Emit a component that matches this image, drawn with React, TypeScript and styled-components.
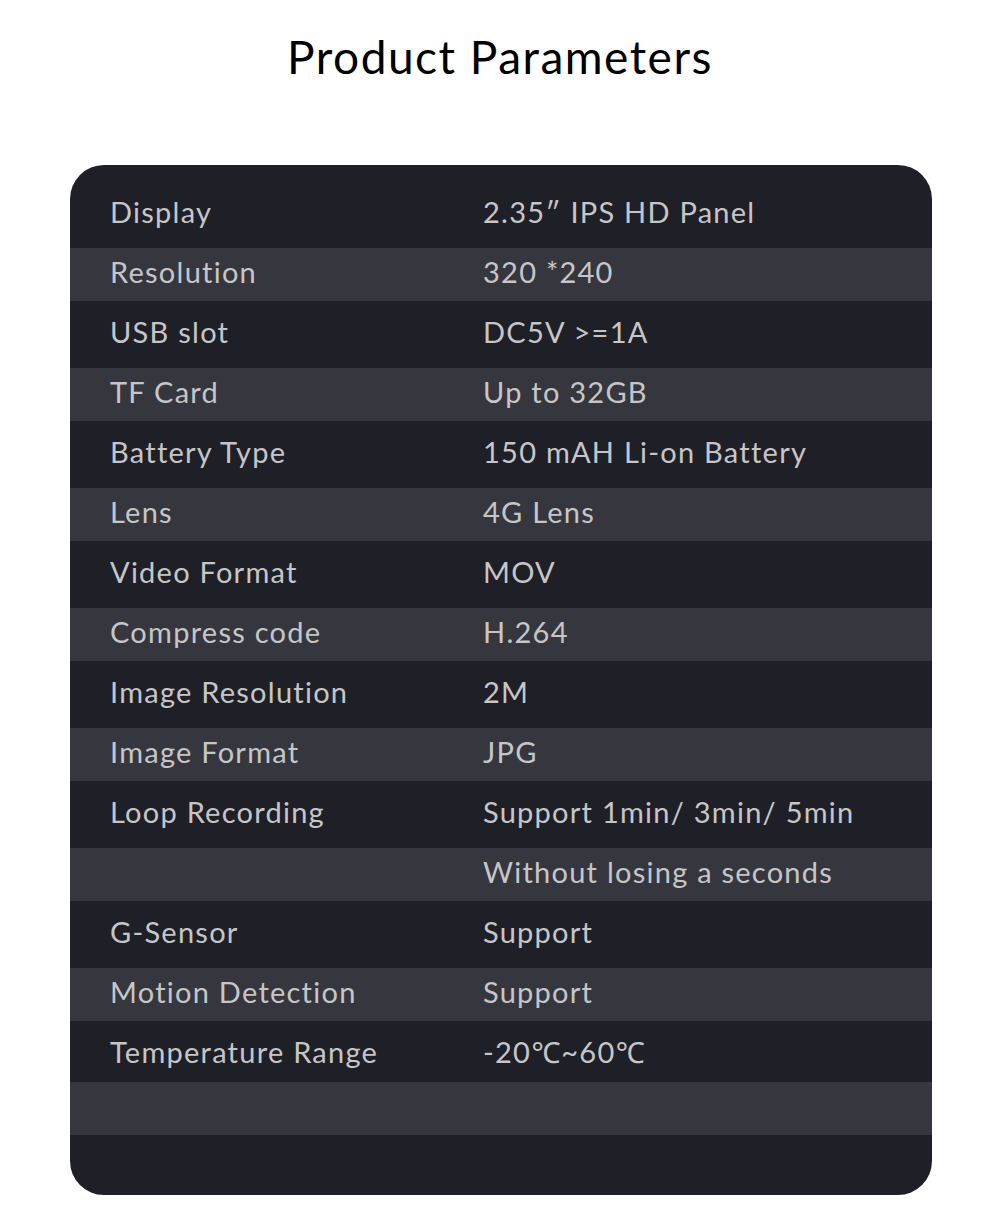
import React from "react";
import styled, { createGlobalStyle } from "styled-components";

const GlobalStyle = createGlobalStyle`
  html, body { margin: 0; padding: 0; background: #ffffff; }
  body { font-family: "Lato", "Noto Sans", sans-serif; }
`;

const Page = styled.div`
  width: 1000px;
  padding: 31px 0 17px;
  box-sizing: border-box;
`;

const Title = styled.h1`
  margin: 0 0 82px;
  text-align: center;
  font-family: "Lato", "Noto Sans", sans-serif;
  font-weight: 400;
  font-size: 46px;
  line-height: 52px;
  color: #000000;
  letter-spacing: 1.5px;
`;

const Card = styled.div`
  margin: 0 68px 0 70px;
  background: #1f2027;
  border-radius: 34px;
  padding: 16px 0 60px;
  overflow: hidden;
`;

const Row = styled.div<{ $striped: boolean; $short?: boolean }>`
  display: grid;
  grid-template-columns: 373px 1fr;
  align-items: center;
  box-sizing: border-box;
  height: ${(p) => (p.$striped ? 53 : p.$short ? 61 : 67)}px;
  padding: 0 0 ${(p) => (p.$short ? 0 : 6)}px 40px;
  background: ${(p) => (p.$striped ? "#36373e" : "transparent")};
`;

const Cell = styled.div`
  font-family: "Lato", "Noto Sans", sans-serif;
  font-size: 29px;
  color: #c6c6c8;
  white-space: nowrap;
  letter-spacing: 1.25px;
`;

const rows: [string, string][] = [
  ["Display", "2.35″ IPS HD Panel"],
  ["Resolution", "320 *240"],
  ["USB slot", "DC5V >=1A"],
  ["TF Card", "Up to 32GB"],
  ["Battery Type", "150 mAH Li-on Battery"],
  ["Lens", "4G Lens"],
  ["Video Format", "MOV"],
  ["Compress code", "H.264"],
  ["Image Resolution", "2M"],
  ["Image Format", "JPG"],
  ["Loop Recording", "Support 1min/ 3min/ 5min"],
  ["", "Without losing a seconds"],
  ["G-Sensor", "Support"],
  ["Motion Detection", "Support"],
  ["Temperature Range", "-20℃~60℃"],
  ["", ""],
];

export default function App() {
  return (
    <Page>
      <GlobalStyle />
      <Title>Product Parameters</Title>
      <Card>
        {rows.map(([label, value], i) => (
          <Row key={i} $striped={i % 2 === 1} $short={i === 14}>
            <Cell>{label}</Cell>
            <Cell>{value}</Cell>
          </Row>
        ))}
      </Card>
    </Page>
  );
}
